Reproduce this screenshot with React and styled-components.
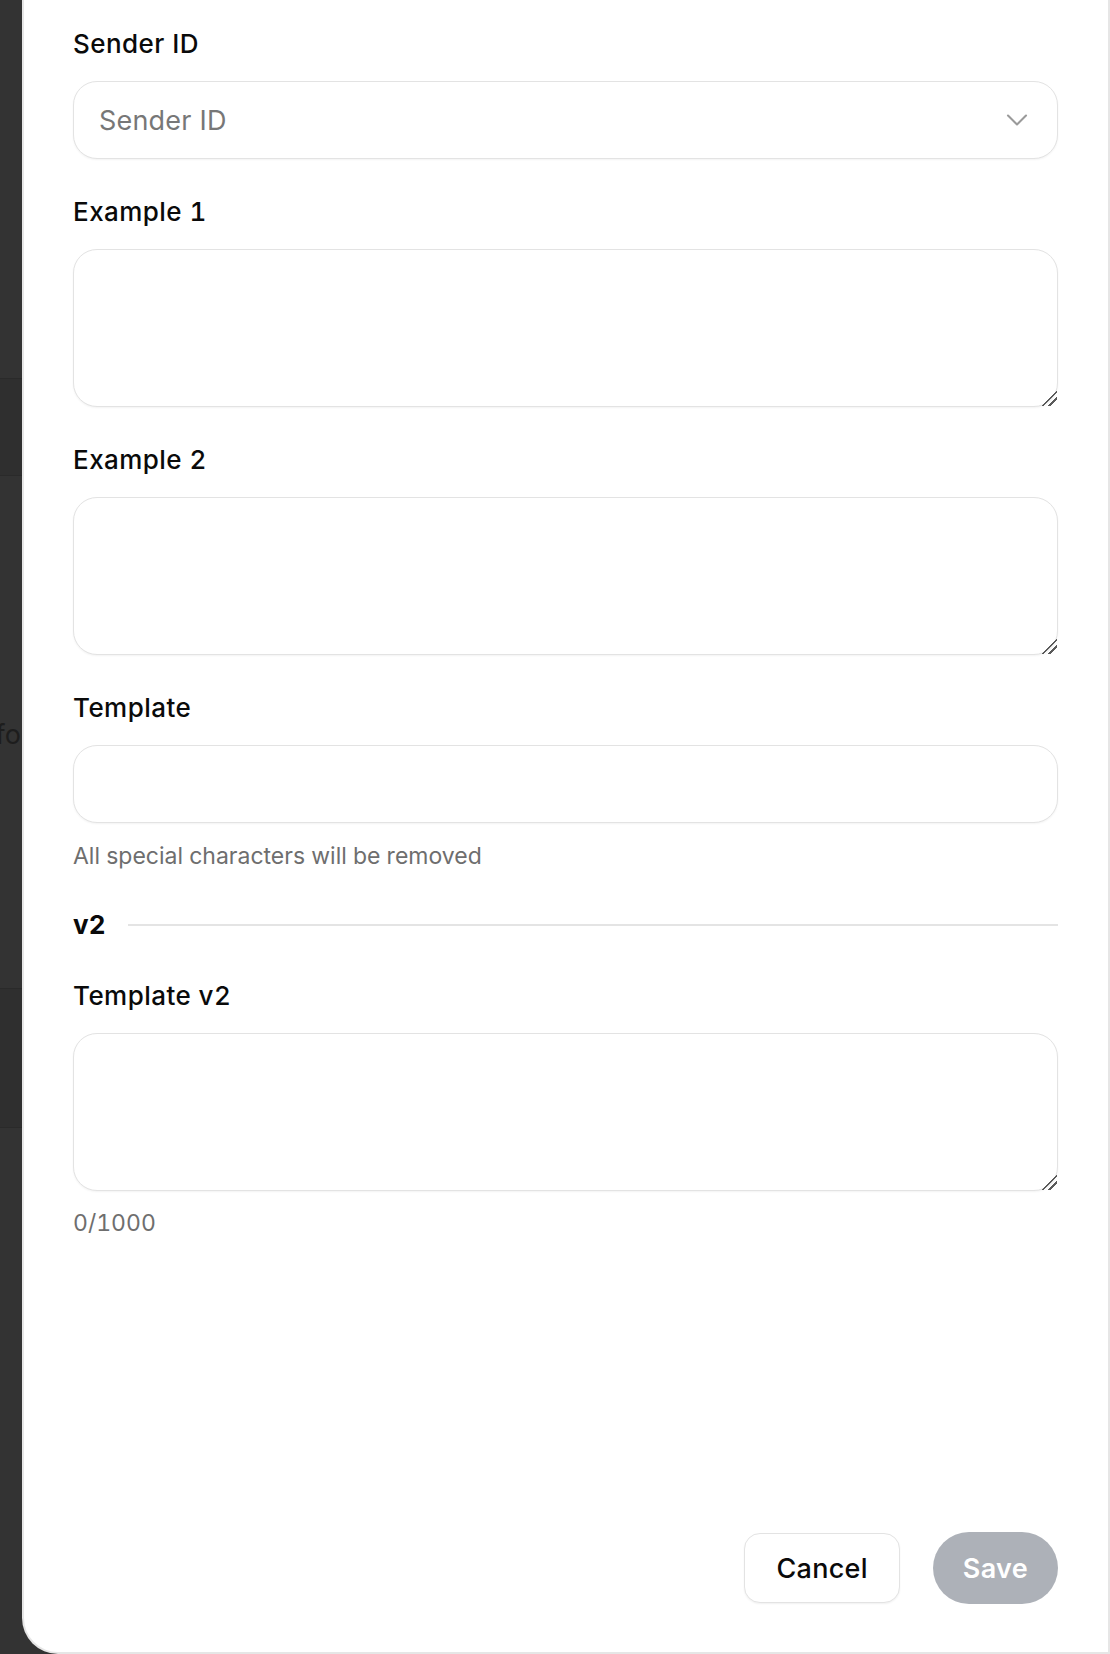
import React from "react";
import styled, { createGlobalStyle } from "styled-components";
import { ChevronDown } from "lucide-react";

const GlobalStyle = createGlobalStyle`
  html, body {
    margin: 0;
    padding: 0;
    background: #333333;
  }
  body {
    font-family: Inter, "Noto Sans", "Liberation Sans", sans-serif;
    color: #0a0a0a;
  }
  * { box-sizing: border-box; }
`;

const Screen = styled.div`
  display: flex;
  min-height: 100vh;
`;

const Backdrop = styled.div`
  width: 22px;
  flex-shrink: 0;
  display: flex;
  flex-direction: column;
  overflow: hidden;
  background: #333333;
`;

const Band = styled.div`
  height: ${(p) => p.h}px;
  flex-shrink: 0;
  background: ${(p) => (p.dark ? "#2f2f2f" : "#333333")};
  border-top: ${(p) => (p.line ? "1px solid #2a2a2a" : "none")};
  display: flex;
  justify-content: flex-end;
  align-items: flex-start;
  white-space: nowrap;
`;

const GhostText = styled.span`
  font-size: 27px;
  line-height: 1;
  color: #1d1d1d;
  margin-top: ${(p) => p.top}px;
  padding-right: 1px;
`;

const Panel = styled.div`
  flex: 1;
  min-height: 100vh;
  background: #ffffff;
  border: 2px solid #e6e6e6;
  border-top: none;
  border-bottom-left-radius: 36px;
  padding: 26px 50px 48px 49px;
  display: flex;
  flex-direction: column;
`;

const Form = styled.div`
  display: flex;
  flex-direction: column;
`;

const Field = styled.div`
  display: flex;
  flex-direction: column;
  margin-bottom: ${(p) => p.gap ?? 35}px;
`;

const Label = styled.label`
  font-size: 26px;
  line-height: 36px;
  font-weight: 500;
  letter-spacing: 0.45px;
  font-variant-numeric: tabular-nums;
  color: #0a0a0a;
  margin-bottom: 19px;
`;

const boxLook = `
  border: 1.5px solid #e3e3e3;
  border-radius: 24px;
  box-shadow: 0 1px 2px rgba(0, 0, 0, 0.05);
  background: #fff;
`;

const SelectBox = styled.div`
  ${boxLook}
  height: 78px;
  display: flex;
  align-items: center;
  justify-content: space-between;
  padding: 0 22px 0 25px;
  color: #777777;
  font-size: 27px;
  letter-spacing: 0.2px;
`;

const TextInput = styled.input`
  ${boxLook}
  height: 78px;
  padding: 0 25px;
  font: inherit;
  font-size: 26px;
  outline: none;
`;

const TextArea = styled.textarea`
  ${boxLook}
  height: 158px;
  padding: 18px 25px;
  font: inherit;
  font-size: 26px;
  outline: none;
  resize: vertical;

  &::-webkit-resizer {
    background: linear-gradient(
      135deg,
      transparent 0 48%,
      #5a5a5a 48% 56%,
      transparent 56% 70%,
      #5a5a5a 70% 78%,
      transparent 78%
    );
  }
`;

const Hint = styled.div`
  font-size: 23px;
  line-height: 32px;
  color: #6e6e6e;
  font-variant-numeric: tabular-nums;
  margin-top: ${(p) => p.top ?? 17}px;
`;

const Section = styled.div`
  display: flex;
  align-items: center;
  gap: 22px;
  margin-bottom: 35px;
`;

const SectionTitle = styled.span`
  font-size: 26px;
  line-height: 36px;
  font-weight: 700;
  letter-spacing: 0.3px;
`;

const Rule = styled.div`
  flex: 1;
  height: 1.5px;
  background: #e4e4e4;
`;

const Footer = styled.div`
  margin-top: auto;
  display: flex;
  justify-content: flex-end;
  align-items: center;
  gap: 33px;
`;

const Button = styled.button`
  height: ${(p) => (p.primary ? 72 : 70)}px;
  padding: 0 ${(p) => (p.primary ? 30 : 31)}px;
  border-radius: ${(p) => (p.primary ? 36 : 16)}px;
  border: ${(p) => (p.primary ? "none" : "1.5px solid #e3e3e3")};
  background: ${(p) => (p.primary ? "#adb1b8" : "#ffffff")};
  color: ${(p) => (p.primary ? "#ffffff" : "#0a0a0a")};
  box-shadow: ${(p) => (p.primary ? "none" : "0 1px 2px rgba(0,0,0,0.06)")};
  font-family: inherit;
  font-size: 27px;
  letter-spacing: 0.3px;
  font-weight: ${(p) => (p.primary ? 600 : 500)};
  cursor: pointer;
`;

export default function App() {
  return (
    <>
      <GlobalStyle />
      <Screen>
        <Backdrop>
          <Band h={378} />
          <Band h={97} dark line />
          <Band h={513} line>
            <GhostText top={245}>Info</GhostText>
          </Band>
          <Band h={139} dark line />
          <Band h={527} line />
        </Backdrop>
        <Panel>
          <Form>
            <Field>
              <Label>Sender ID</Label>
              <SelectBox>
                <span>Sender ID</span>
                <ChevronDown size={36} color="#9a9a9a" strokeWidth={1.4} />
              </SelectBox>
            </Field>
            <Field>
              <Label>Example 1</Label>
              <TextArea />
            </Field>
            <Field>
              <Label>Example 2</Label>
              <TextArea />
            </Field>
            <Field>
              <Label>Template</Label>
              <TextInput />
              <Hint>All special characters will be removed</Hint>
            </Field>
            <Section>
              <SectionTitle>v2</SectionTitle>
              <Rule />
            </Section>
            <Field gap={0}>
              <Label>Template v2</Label>
              <TextArea />
              <Hint top={16}>0/1000</Hint>
            </Field>
          </Form>
          <Footer>
            <Button>Cancel</Button>
            <Button primary>Save</Button>
          </Footer>
        </Panel>
      </Screen>
    </>
  );
}
